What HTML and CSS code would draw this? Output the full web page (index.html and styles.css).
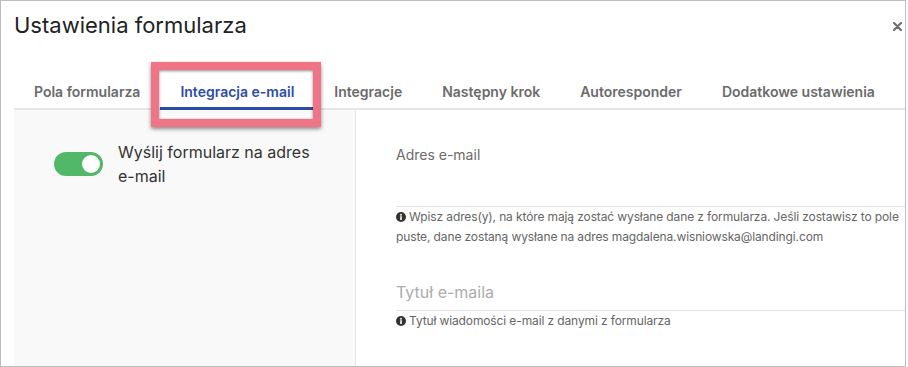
FILE: index.html
```html
<!DOCTYPE html>
<html lang="pl">
<head>
<meta charset="utf-8">
<link rel="stylesheet" href="styles.css">
</head>
<body>
<div class="frame">
  <div class="header">
    <h1 class="title">Ustawienia formularza</h1>
    <svg class="close" width="9" height="9" viewBox="0 0 9 9"><path d="M1 1L8 8M8 1L1 8" stroke="#6f6f6f" stroke-width="2.2" stroke-linecap="round"/></svg>
  </div>
  <div class="tabs">
    <div class="tab">Pola formularza</div>
    <div class="tab active">Integracja e-mail</div>
    <div class="tab">Integracje</div>
    <div class="tab">Następny krok</div>
    <div class="tab">Autoresponder</div>
    <div class="tab">Dodatkowe ustawienia</div>
  </div>
  <div class="content">
    <div class="side">
      <div class="switch-row">
        <div class="switch"><div class="knob"></div></div>
        <div class="switch-label">Wyślij formularz na adres e-mail</div>
      </div>
    </div>
    <div class="main">
      <div class="field">
        <div class="label">Adres e-mail</div>
        <div class="input tall"></div>
        <div class="help"><svg class="info" width="10" height="10" viewBox="0 0 10 10"><circle cx="5" cy="5" r="5" fill="#333"/><rect x="4.2" y="4.2" width="1.6" height="3.8" fill="#fff"/><circle cx="5" cy="2.7" r="0.95" fill="#fff"/></svg>Wpisz adres(y), na które mają zostać wysłane dane z formularza. Jeśli zostawisz to pole puste, dane zostaną wysłane na adres magdalena.wisniowska@landingi.com</div>
      </div>
      <div class="field second">
        <div class="input"><span class="placeholder">Tytuł e-maila</span></div>
        <div class="help"><svg class="info" width="10" height="10" viewBox="0 0 10 10"><circle cx="5" cy="5" r="5" fill="#333"/><rect x="4.2" y="4.2" width="1.6" height="3.8" fill="#fff"/><circle cx="5" cy="2.7" r="0.95" fill="#fff"/></svg>Tytuł wiadomości e-mail z danymi z formularza</div>
      </div>
    </div>
  </div>
  <div class="highlight"></div>
</div>
</body>
</html>
```

FILE: styles.css
```css
* { box-sizing: border-box; }
html, body { margin: 0; padding: 0; background: #fff; }
body { font-family: Inter, "Noto Sans", sans-serif; }

.frame {
  position: relative;
  width: 906px;
  height: 367px;
  border: 1px solid #bdbdbd;
  padding-left: 13px;
  overflow: hidden;
  display: flex;
  flex-direction: column;
}

.header {
  display: flex;
  justify-content: space-between;
  align-items: center;
  padding: 9px 3px 0 0;
}
.title {
  margin: 0;
  font-size: 22px;
  font-weight: 400;
  line-height: 30px;
  color: #222;
}
.close { margin-top: 2px; }

.tabs {
  display: flex;
  margin-top: 30px;
  border-bottom: 2px solid #e6e6e6;
}
.tab {
  padding: 12px 20px 5px;
  line-height: 20px;
  font-size: 14px;
  font-weight: 600;
  color: #6b6b6b;
  border-bottom: 3px solid transparent;
  margin-bottom: -2px;
  white-space: nowrap;
}
.tab.active {
  color: #2d4ea6;
  border-bottom-color: #2a4ea6;
}

.content {
  flex: 1;
  display: flex;
}
.side {
  width: 342px;
  background: #f9f9f9;
  border-right: 1px solid #e6e6e6;
  padding: 30px 40px 0;
}
.switch-row {
  display: flex;
  align-items: center;
  gap: 15px;
}
.switch {
  flex: none;
  width: 49px;
  height: 24px;
  border-radius: 12px;
  background: #50b866;
  display: flex;
  justify-content: flex-end;
  align-items: center;
  padding-right: 3px;
}
.knob {
  width: 18px;
  height: 18px;
  border-radius: 50%;
  background: #fff;
}
.switch-label {
  font-size: 16px;
  line-height: 24px;
  color: #333;
}

.main {
  flex: 1;
  padding: 35px 0 0 40px;
}
.label {
  font-size: 14px;
  line-height: 20px;
  color: #6b6b6b;
}
.input {
  height: 32px;
  border-bottom: 1px solid #e2e2e2;
  padding-top: 1px;
  line-height: 24px;
  font-size: 16px;
}
.input.tall { height: 42px; }
.placeholder { color: #acacac; }
.field.second { margin-top: 33px; }
.help {
  font-size: 12px;
  line-height: 19.5px;
  letter-spacing: -0.12px;
  color: #666;
}
.info {
  margin-right: 3px;
  vertical-align: -1px;
}

.highlight {
  position: absolute;
  left: 150px;
  top: 61px;
  width: 170px;
  height: 65px;
  border: 8px solid #ee7486;
  box-shadow: 0 2px 4px rgba(0,0,0,.45), inset 0 1px 3px rgba(0,0,0,.45);
  pointer-events: none;
}
```
